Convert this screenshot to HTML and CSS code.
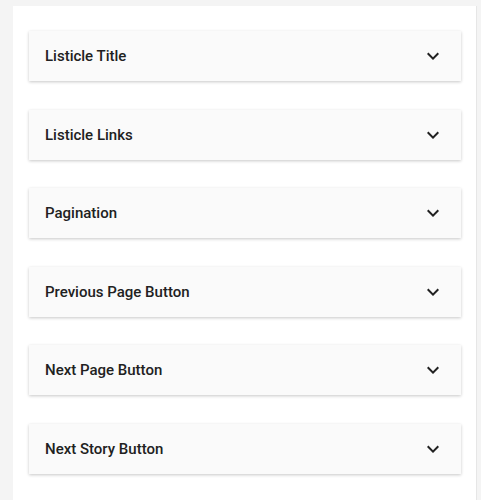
FILE: index.html
```html
<!DOCTYPE html>
<html>
<head>
<meta charset="utf-8">
<link rel="stylesheet" href="styles.css">
</head>
<body>
<div class="panel">
  <div class="card"><span class="title">Listicle Title</span><svg class="chev" viewBox="0 0 24 24"><path d="M16.59 8.59L12 13.17 7.41 8.59 6 10l6 6 6-6z"/></svg></div>
  <div class="card"><span class="title">Listicle Links</span><svg class="chev" viewBox="0 0 24 24"><path d="M16.59 8.59L12 13.17 7.41 8.59 6 10l6 6 6-6z"/></svg></div>
  <div class="card"><span class="title">Pagination</span><svg class="chev" viewBox="0 0 24 24"><path d="M16.59 8.59L12 13.17 7.41 8.59 6 10l6 6 6-6z"/></svg></div>
  <div class="card"><span class="title">Previous Page Button</span><svg class="chev" viewBox="0 0 24 24"><path d="M16.59 8.59L12 13.17 7.41 8.59 6 10l6 6 6-6z"/></svg></div>
  <div class="card"><span class="title">Next Page Button</span><svg class="chev" viewBox="0 0 24 24"><path d="M16.59 8.59L12 13.17 7.41 8.59 6 10l6 6 6-6z"/></svg></div>
  <div class="card"><span class="title">Next Story Button</span><svg class="chev" viewBox="0 0 24 24"><path d="M16.59 8.59L12 13.17 7.41 8.59 6 10l6 6 6-6z"/></svg></div>
</div>
</body>
</html>
```
FILE: styles.css
```css
html, body {
  margin: 0;
  padding: 0;
  height: 100%;
  background: #f4f4f4;
  font-family: Roboto, "Liberation Sans", sans-serif;
}
body {
  display: flex;
  flex-direction: column;
  padding-top: 6px;
  box-sizing: border-box;
}
.panel {
  flex: 1;
  margin: 0 4px 0 13px;
  background: #ffffff;
  border-right: 1px solid #e6e6e6;
  padding: 25px 15px 0 16px;
  display: flex;
  flex-direction: column;
  gap: 28.6px;
}
.card {
  height: 50px;
  flex: none;
  background: #fafafa;
  box-shadow: 0 1px 3px rgba(0,0,0,0.22);
  display: flex;
  align-items: center;
  justify-content: space-between;
  padding: 0 16px;
}
.title {
  font-size: 15px;
  font-weight: 500;
  color: #212121;
}
.chev {
  width: 24px;
  height: 24px;
  fill: #212121;
}
```
